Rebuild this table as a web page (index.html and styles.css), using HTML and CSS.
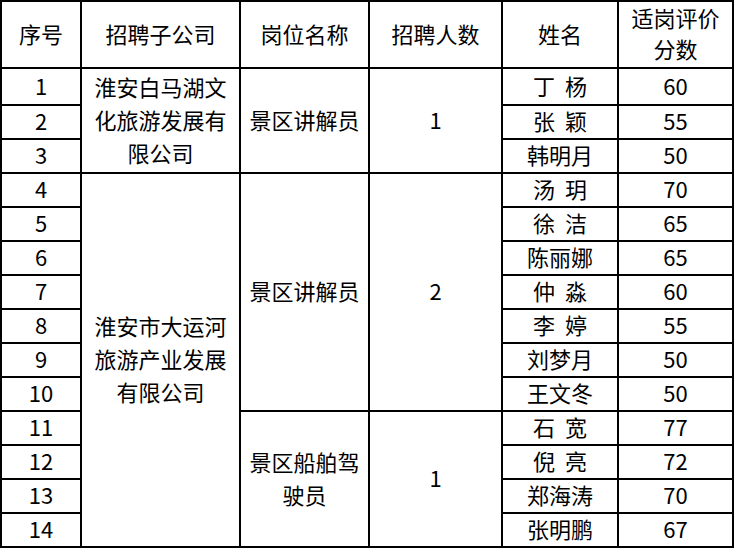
FILE: index.html
```html
<!DOCTYPE html>
<html lang="zh-CN">
<head>
<meta charset="utf-8">
<title>招聘结果</title>
<link rel="stylesheet" href="styles.css">
</head>
<body>
<table class="grid">
  <colgroup>
    <col class="c-no">
    <col class="c-co">
    <col class="c-pos">
    <col class="c-cnt">
    <col class="c-name">
    <col class="c-score">
  </colgroup>
  <thead>
    <tr class="r-head">
      <th>序号</th>
      <th>招聘子公司</th>
      <th>岗位名称</th>
      <th>招聘人数</th>
      <th>姓名</th>
      <th class="two">适岗评价<br>分数</th>
    </tr>
  </thead>
  <tbody>
    <tr class="r-first">
      <td>1</td>
      <td rowspan="3" class="multi">淮安白马湖文<br>化旅游发展有<br>限公司</td>
      <td rowspan="3">景区讲解员</td>
      <td rowspan="3">1</td>
      <td>丁&nbsp;&nbsp;杨</td>
      <td>60</td>
    </tr>
    <tr class="r"><td>2</td><td>张&nbsp;&nbsp;颖</td><td>55</td></tr>
    <tr class="r"><td>3</td><td>韩明月</td><td>50</td></tr>
    <tr class="r">
      <td>4</td>
      <td rowspan="11" class="multi">淮安市大运河<br>旅游产业发展<br>有限公司</td>
      <td rowspan="7">景区讲解员</td>
      <td rowspan="7">2</td>
      <td>汤&nbsp;&nbsp;玥</td>
      <td>70</td>
    </tr>
    <tr class="r"><td>5</td><td>徐&nbsp;&nbsp;洁</td><td>65</td></tr>
    <tr class="r"><td>6</td><td>陈丽娜</td><td>65</td></tr>
    <tr class="r"><td>7</td><td>仲&nbsp;&nbsp;淼</td><td>60</td></tr>
    <tr class="r"><td>8</td><td>李&nbsp;&nbsp;婷</td><td>55</td></tr>
    <tr class="r"><td>9</td><td>刘梦月</td><td>50</td></tr>
    <tr class="r"><td>10</td><td>王文冬</td><td>50</td></tr>
    <tr class="r">
      <td>11</td>
      <td rowspan="4" class="multi">景区船舶驾<br>驶员</td>
      <td rowspan="4">1</td>
      <td>石&nbsp;&nbsp;宽</td>
      <td>77</td>
    </tr>
    <tr class="r"><td>12</td><td>倪&nbsp;&nbsp;亮</td><td>72</td></tr>
    <tr class="r"><td>13</td><td>郑海涛</td><td>70</td></tr>
    <tr class="r"><td>14</td><td>张明鹏</td><td>67</td></tr>
  </tbody>
</table>
</body>
</html>
```
FILE: styles.css
```css
html, body {
  margin: 0;
  padding: 0;
  background: #fff;
}

body {
  font-family: "Noto Sans CJK SC", "Noto Sans", sans-serif;
  font-size: 22px;
  color: #000;
}

.grid {
  border-collapse: collapse;
  table-layout: fixed;
  width: 733px;
}

.grid th,
.grid td {
  border: 2px solid #000;
  padding: 0 0 3px 0;
  text-align: center;
  vertical-align: middle;
  font-weight: normal;
  line-height: 29px;
  white-space: nowrap;
}

.c-no { width: 80px; }
.c-co { width: 159px; }
.c-pos { width: 129px; }
.c-cnt { width: 133px; }
.c-name { width: 116px; }
.c-score { width: 115px; }

.r-head { height: 67px; }
.r-first { height: 37px; }
.r { height: 34px; }

.grid .two {
  line-height: 31px;
}

.grid .multi {
  line-height: 33px;
}
```
